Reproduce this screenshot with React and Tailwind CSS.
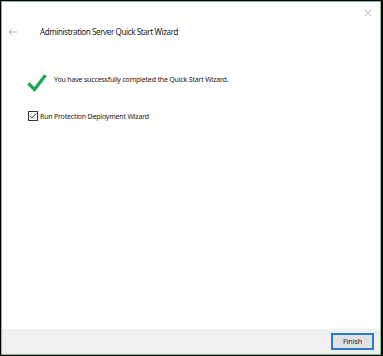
import React from 'react';

function App() {
  return (
    <div className="h-[356px] w-[383px] bg-black p-px" style={{ fontFamily: '"Noto Sans", "Open Sans", sans-serif' }}>
      <div className="flex h-[354px] w-[380px] flex-col border border-[#7dbf9a] bg-white">
        <div className="relative h-[52px]">
          <svg className="absolute left-[362px] top-[7px] h-[8px] w-[8px] text-[#a8a8a8]" viewBox="0 0 10 10" fill="none" stroke="currentColor" strokeWidth="1">
            <path d="M1 1l8 8M9 1l-8 8" />
          </svg>
          <div className="absolute left-[6px] top-[26px] flex items-center">
            <svg className="h-[8px] w-[10px] text-[#b0b0b0]" viewBox="0 0 10 8" fill="none" stroke="currentColor" strokeWidth="1">
              <path d="M9 4H1M4 1L1 4l3 3" />
            </svg>
            <span className="ml-[22px] text-[8px] leading-none tracking-[-0.38px] text-[#1a1a1a]">Administration Server Quick Start Wizard</span>
          </div>
        </div>

        <div className="flex items-center pl-[25px] pt-[20px]">
          <svg className="h-[18px] w-[20px]" viewBox="0 0 20 18" fill="none" stroke="#1ea356" strokeWidth="3.2" strokeLinecap="square">
            <path d="M2.5 10.5l5 5L17.5 2.5" />
          </svg>
          <span className="ml-[7px] -mt-[7px] text-[7px] leading-none tracking-[-0.18px] text-[#1a1a1a]">You have successfully completed the Quick Start Wizard.</span>
        </div>

        <div className="mt-[19px] flex items-center pl-[26px]">
          <div className="flex h-[10px] w-[10px] items-center justify-center border border-[#333]">
            <svg className="h-[8px] w-[8px]" viewBox="0 0 8 8" fill="none" stroke="#333" strokeWidth="1">
              <path d="M1 4l2 2 4-4.5" />
            </svg>
          </div>
          <span className="ml-[2px] text-[7px] leading-none tracking-[-0.2px] text-[#1a1a1a]">Run Protection Deployment Wizard</span>
        </div>

        <div className="flex-1" />

        <div className="flex h-[25px] items-center justify-end bg-[#f0f0f0] pr-[6px]">
          <button className="flex h-[17px] w-[43px] items-center justify-center border-2 border-[#2a7ad4] bg-[#e1e1e1] text-[7px] leading-none text-[#1a1a1a]">
            Finish
          </button>
        </div>
      </div>
    </div>
  );
}

export default App;
